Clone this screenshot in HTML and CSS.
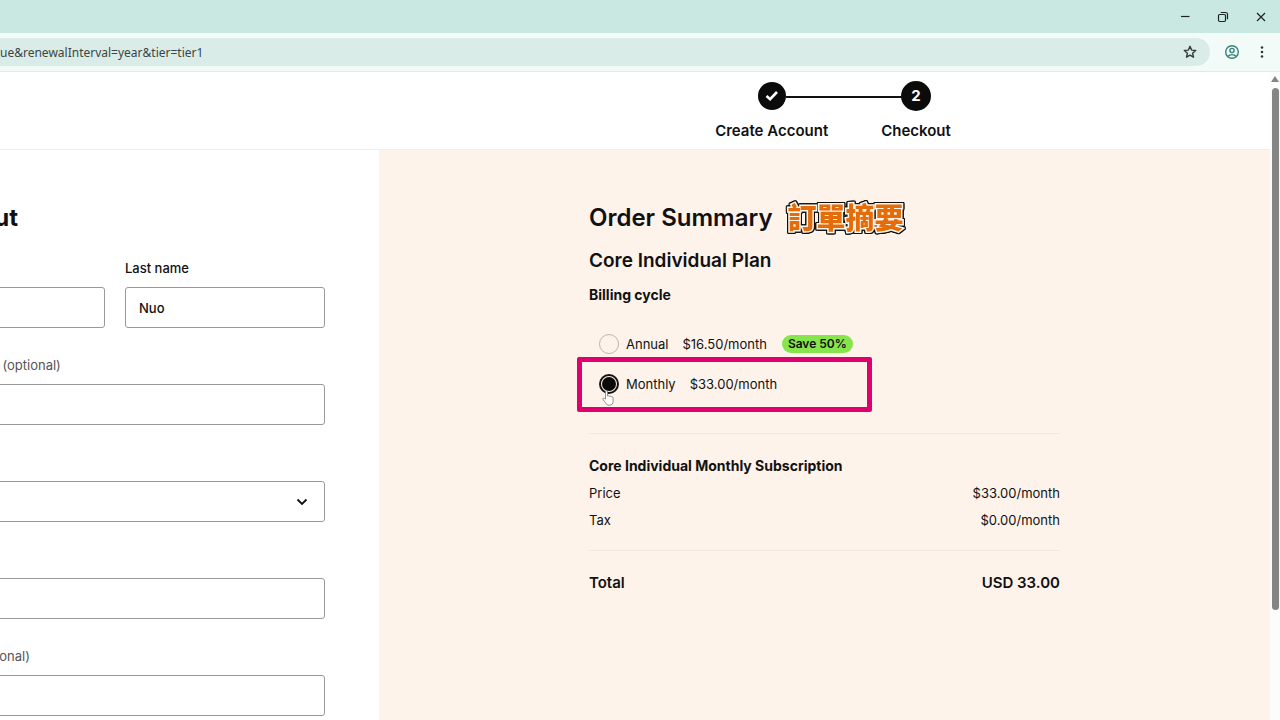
FILE: index.html
```
<!DOCTYPE html>
<html lang="en">
<head>
    <meta charset="UTF-8">
    <meta name="viewport" content="width=device-width, initial-scale=1.0">
    <title>Checkout</title>
    <link rel="stylesheet" href="styles.css">
</head>
<body>
    <div class="titlebar">
        <button class="window-btn" aria-label="Minimize">
            <svg width="12" height="12" viewBox="0 0 12 12"><path d="M2 5.500h8.500"/></svg>
        </button>
        <button class="window-btn" aria-label="Restore">
            <svg width="12" height="12" viewBox="0 0 12 12"><rect x="1.500" y="3.500" width="7" height="7" rx="1.200"/><path d="M3.700 1.500h4.800a2 2 0 0 1 2 2v4.800"/></svg>
        </button>
        <button class="window-btn" aria-label="Close">
            <svg width="12" height="12" viewBox="0 0 12 12"><path d="M2 2l8 8M10 2l-8 8"/></svg>
        </button>
    </div>

    <div class="toolbar">
        <div class="address-bar">
            <input type="text" class="url" aria-label="Address" value="ue&amp;renewalInterval=year&amp;tier=tier1">
            <button class="icon-btn" aria-label="Bookmark">
                <svg width="14" height="14" viewBox="0 0 14 14" fill="none" stroke="#333b39" stroke-width="1.400" stroke-linejoin="round"><path d="M7 1.300l1.600 3.800 4.100.4-3.100 2.700.9 4L7 10.100l-3.500 2.100.9-4-3.100-2.700 4.100-.4z"/></svg>
            </button>
        </div>
        <button class="icon-btn" aria-label="Profile">
            <svg width="16" height="16" viewBox="0 0 16 16" fill="none" stroke="#34827a" stroke-width="1.400"><circle cx="8" cy="8" r="6.300"/><circle cx="8" cy="6.500" r="2.100"/><path d="M3.800 12.500c1-1.300 2.500-1.900 4.200-1.900s3.200.6 4.200 1.900"/></svg>
        </button>
        <button class="icon-btn" aria-label="Menu">
            <svg width="16" height="16" viewBox="0 0 16 16" fill="#333b39"><circle cx="8" cy="3.500" r="1.300"/><circle cx="8" cy="8" r="1.300"/><circle cx="8" cy="12.500" r="1.300"/></svg>
        </button>
    </div>

    <div class="viewport">
        <div class="page">
            <header>
                <ol class="steps">
                    <li class="step">
                        <span class="step-dot">
                            <svg width="14" height="12" viewBox="0 0 14 12" fill="none" stroke="#fff" stroke-width="2.600"><path d="M1.500 6l3.600 3.200L12 2"/></svg>
                        </span>
                        <span>Create Account</span>
                    </li>
                    <li class="step">
                        <span class="step-dot current">2</span>
                        <span>Checkout</span>
                    </li>
                </ol>
            </header>

            <main>
                <section class="details">
                    <form class="form">
                        <h1>Checkout</h1>
                        <div class="field">
                            <label for="firstName">First name</label>
                            <input type="text" id="firstName">
                        </div>
                        <div class="field">
                            <label for="lastName">Last name</label>
                            <input type="text" id="lastName" value="Nuo">
                        </div>
                        <div class="field wide">
                            <label for="company">Business name <span class="optional">(optional)</span></label>
                            <input type="text" id="company">
                        </div>
                        <div class="field wide">
                            <label for="country">Country</label>
                            <div class="select-wrap">
                                <select id="country"><option></option></select>
                                <svg class="chevron" width="12" height="8" viewBox="0 0 12 8" fill="none" stroke="#111" stroke-width="1.800"><path d="M1.500 1.500L6 6l4.500-4.500"/></svg>
                            </div>
                        </div>
                        <div class="field wide">
                            <label for="address">Address</label>
                            <input type="text" id="address">
                        </div>
                        <div class="field wide">
                            <label for="address2">Address 2 <span class="optional">(optional)</span></label>
                            <input type="text" id="address2">
                        </div>
                    </form>
                </section>

                <section class="order">
                    <div class="summary">
                        <div class="summary-title">
                            <h2>Order Summary</h2>
                            <span class="caption" lang="zh-Hant">訂單摘要</span>
                        </div>
                        <h3>Core Individual Plan</h3>
                        <fieldset>
                            <legend>Billing cycle</legend>
                            <div class="plan">
                                <input type="radio" name="cycle" id="annual">
                                <label for="annual"><span>Annual</span><span>$16.50/month</span></label>
                                <span class="badge">Save 50%</span>
                            </div>
                            <div class="plan selected">
                                <input type="radio" name="cycle" id="monthly" checked>
                                <label for="monthly"><span>Monthly</span><span>$33.00/month</span></label>
                                <svg class="pointer" width="12" height="16" viewBox="0 0 12 16" fill="#fff" stroke="#777" stroke-width=".8" stroke-linejoin="round"><path d="M3.500 9V1.700c0-1.400 2-1.400 2 0v4.500c.3-.8 1.800-.6 1.900.3.400-.7 1.700-.4 1.800.5.500-.5 1.900-.2 1.900 1v3.200c0 2.500-1.400 4-3.700 4-2 0-3.100-.8-4-2.500L1 9.500c-.6-1.100.7-1.900 1.500-1z"/></svg>
                            </div>
                        </fieldset>

                        <div class="subscription">
                            <h4>Core Individual Monthly Subscription</h4>
                            <table>
                                <tr>
                                    <th>Price</th>
                                    <td>$33.00/month</td>
                                </tr>
                                <tr>
                                    <th>Tax</th>
                                    <td>$0.00/month</td>
                                </tr>
                            </table>
                        </div>

                        <div class="total">
                            <span>Total</span>
                            <span>USD 33.00</span>
                        </div>
                    </div>
                </section>
            </main>
        </div>

        <div class="scrollbar">
            <svg width="8" height="6" viewBox="0 0 8 6" fill="#858585"><path d="M4 0l4 6H0z"/></svg>
            <div class="thumb"></div>
        </div>
    </div>
</body>
</html>
```
FILE: styles.css
```
*, *::before, *::after {
    box-sizing: border-box;
}

body {
    margin: 0;
    min-height: 100vh;
    display: flex;
    flex-direction: column;
    font-family: Inter, "Noto Sans CJK TC", sans-serif;
    font-size: 13px;
    line-height: 20px;
    color: #111;
    background-color: white;
}

h1, h2, h3, h4, ol, fieldset, legend {
    margin: 0;
    padding: 0;
    border: none;
    font-weight: 600;
}

button {
    display: flex;
    align-items: center;
    justify-content: center;
    padding: 0;
    border: none;
    background: none;
    cursor: pointer;
}

/* browser window */
.titlebar {
    display: flex;
    justify-content: flex-end;
    height: 33px;
    background-color: #c9e8e2;
}

.window-btn {
    width: 38px;
}

.window-btn svg {
    fill: none;
    stroke: #222;
    stroke-width: 1.2;
}

.toolbar {
    display: flex;
    align-items: center;
    gap: 6px;
    height: 39px;
    padding-right: 6px;
    background-color: #f2fbf8;
    border-bottom: 1px solid #e2ebe8;
}

.address-bar {
    flex: 1;
    display: flex;
    align-items: center;
    height: 28px;
    margin-right: 4px;
    padding-right: 8px;
    background-color: #d9ece7;
    border-radius: 0 14px 14px 0;
}

.url {
    flex: 1;
    padding: 0;
    border: none;
    background: none;
    font-family: "Noto Sans", sans-serif;
    font-size: 12px;
    color: #3c4644;
}

.icon-btn {
    width: 24px;
    height: 24px;
}

.viewport {
    flex: 1;
    display: flex;
}

.page {
    flex: 1;
    min-width: 0;
    display: flex;
    flex-direction: column;
}

.scrollbar {
    width: 10px;
    padding: 4px 1px 0;
    display: flex;
    flex-direction: column;
    align-items: center;
    gap: 6px;
    background-color: #fcfcfc;
}

.thumb {
    width: 7px;
    height: 81%;
    border-radius: 4px;
    background-color: #858585;
}

/* steps */
header {
    display: flex;
    justify-content: center;
    height: 78px;
    padding: 10px 0 0 396px;
    border-bottom: 1px solid #f0eeec;
}

.steps {
    display: flex;
    gap: 53px;
    list-style: none;
    font-size: 15px;
}

.step {
    position: relative;
    display: flex;
    flex-direction: column;
    align-items: center;
    gap: 11px;
}

.step + .step::before {
    content: "";
    position: absolute;
    top: 14px;
    right: 50%;
    width: 144px;
    height: 2px;
    background-color: #111;
    clip-path: inset(0 0 0 14px);
}

.step-dot {
    position: relative;
    display: flex;
    align-items: center;
    justify-content: center;
    width: 28px;
    height: 28px;
    border-radius: 50%;
    background-color: #0b0b0b;
    color: white;
}

.current {
    width: 30px;
    height: 30px;
    margin: -1px 0;
    font-weight: 700;
}

main {
    flex: 1;
    display: flex;
}

/* customer details */
.details {
    flex: 0 0 379px;
    display: flex;
    justify-content: flex-end;
    padding: 52px 54px 0 0;
    overflow: hidden;
}

.form {
    flex: 0 0 420px;
    display: grid;
    grid-template-columns: 1fr 1fr;
    gap: 27px 20px;
    align-content: start;
}

h1, h2 {
    font-size: 24px;
    line-height: 32px;
}

h1 {
    grid-column: 1 / -1;
    margin-bottom: -3px;
    font-weight: 700;
}

.field {
    display: flex;
    flex-direction: column;
    gap: 9px;
}

.wide {
    grid-column: 1 / -1;
}

.field label {
    font-weight: 500;
}

.field .optional {
    font-weight: 400;
    color: #555;
}

.field input, .field select {
    width: 100%;
    height: 41px;
    padding: 0 13px;
    border: 1px solid #999;
    border-radius: 3px;
    background-color: white;
    font-family: inherit;
    font-size: 13px;
    font-weight: 500;
    color: #111;
}

.field select {
    display: block;
    appearance: none;
}

.select-wrap {
    position: relative;
}

.chevron {
    position: absolute;
    top: 17px;
    right: 17px;
    pointer-events: none;
}

/* order summary */
.order {
    flex: 1;
    display: flex;
    justify-content: center;
    padding-top: 52px;
    background-color: #fef3eb;
}

.summary {
    width: 471px;
}

.summary-title {
    display: flex;
    align-items: flex-start;
    gap: 15px;
}

.caption {
    font-family: "Noto Sans CJK TC", sans-serif;
    font-size: 29px;
    font-weight: 900;
    line-height: 28px;
    color: #e46c0a;
    -webkit-text-stroke: 3px #fff6ea;
    paint-order: stroke fill;
    filter: drop-shadow(1px 0 0 #111) drop-shadow(-1px 0 0 #111) drop-shadow(0 1px 0 #111) drop-shadow(0 -1px 0 #111);
}

h3 {
    margin-top: 13px;
    font-size: 19px;
    line-height: 28px;
}

legend, h4 {
    font-size: 14px;
    font-weight: 700;
}

fieldset {
    margin-top: 10px;
    padding-bottom: 39px;
    border-bottom: 1px solid #f3e8e1;
}

legend {
    margin-bottom: 29px;
}

.plan {
    position: relative;
    display: flex;
    align-items: center;
    height: 20px;
    padding-left: 10px;
    font-weight: 400;
}

.plan + .plan {
    margin-top: 20px;
}

.plan label {
    display: flex;
    gap: 14px;
    margin: 0 15px 0 7px;
}

.plan input {
    appearance: none;
    width: 20px;
    height: 20px;
    margin: 0;
    border: 1px solid #bdb5b0;
    border-radius: 50%;
}

.plan input:checked {
    padding: 1px;
    border: 2px solid #111;
    background-color: #0b0b0b;
    background-clip: content-box;
}

.badge {
    padding: 0 6px;
    border-radius: 9px;
    background-color: #86e54c;
    font-size: 12px;
    font-weight: 600;
    line-height: 18px;
}

/* frame around the chosen plan */
.selected::after {
    content: "";
    position: absolute;
    top: -17px;
    left: -12px;
    width: 295px;
    height: 55px;
    border: 5px solid #de006e;
    border-radius: 2px;
    pointer-events: none;
}

.pointer {
    position: absolute;
    top: 16px;
    left: 13px;
}

.subscription {
    padding: 22px 0 17px;
    border-bottom: 1px solid #f3e8e1;
}

table {
    width: 100%;
    margin-top: 3px;
    border-collapse: collapse;
}

th, td {
    height: 27px;
    padding: 0;
    font-weight: 400;
    text-align: left;
}

td {
    text-align: right;
}

.total {
    display: flex;
    justify-content: space-between;
    margin-top: 22px;
    font-size: 15px;
    font-weight: 600;
}
```
